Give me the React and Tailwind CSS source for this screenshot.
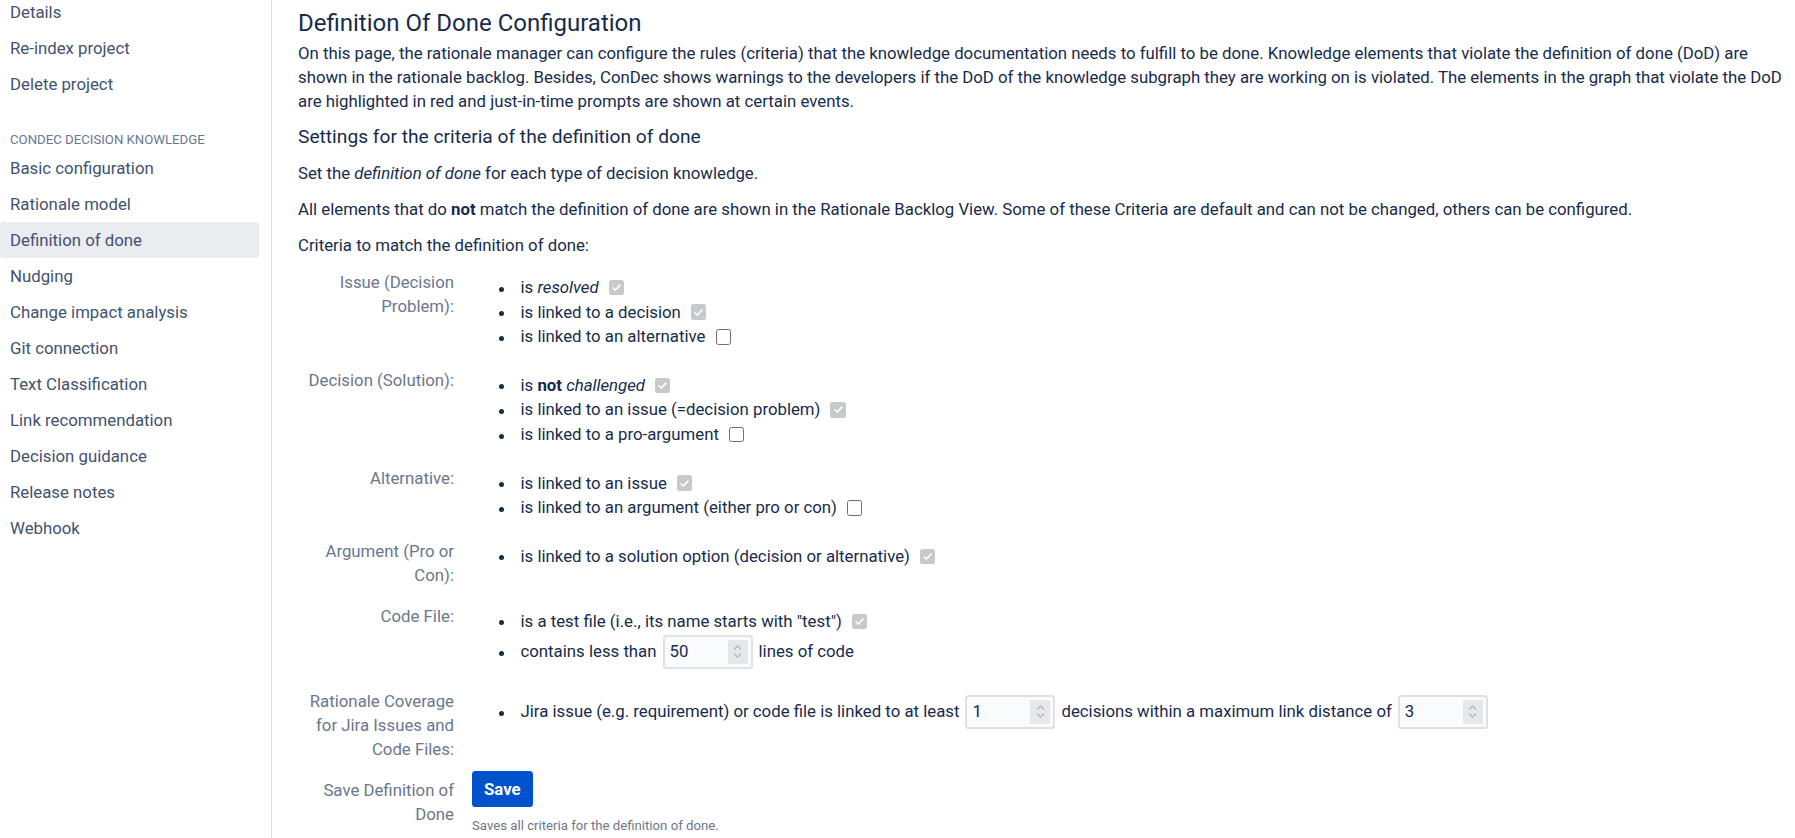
const navTop = ['Details', 'Re-index project', 'Delete project'];
const navDecision = [
  'Basic configuration',
  'Rationale model',
  'Definition of done',
  'Nudging',
  'Change impact analysis',
  'Git connection',
  'Text Classification',
  'Link recommendation',
  'Decision guidance',
  'Release notes',
  'Webhook',
];

function NavItem({ label, active }) {
  return (
    <div
      className={`h-[36px] px-[10px] py-[6px] leading-[24px] rounded-[3.6px] whitespace-nowrap ${
        active ? 'bg-[#ebecf0]' : ''
      }`}
    >
      {label}
    </div>
  );
}

function Checkbox({ checked }) {
  if (checked) {
    return (
      <span className="ml-[10px] inline-flex w-[15.5px] h-[15.5px] shrink-0 items-center justify-center rounded-[2.5px] bg-[#c8c9cc]">
        <svg width="11" height="11" viewBox="0 0 12 12" fill="none">
          <path d="M2.2 6.3 L4.8 8.8 L9.8 3.4" stroke="#ffffff" strokeWidth="1.7" strokeLinecap="round" strokeLinejoin="round" />
        </svg>
      </span>
    );
  }
  return <span className="ml-[10px] inline-block w-[15.5px] h-[15.5px] shrink-0 rounded-[2.5px] border-[1.6px] border-[#6e6e76] bg-white" />;
}

function NumberInput({ value }) {
  return (
    <span className="mx-[6px] flex w-[90px] h-[34px] shrink-0 items-center justify-between rounded-[3.6px] border-2 border-[#dfe1e6] bg-[#fafbfc] pl-[5px] pr-[3px]">
      <span>{value}</span>
      <span className="flex w-[20px] h-[24px] flex-col items-center justify-center gap-[3px] bg-[#e6e7eb]">
        <svg width="9" height="5" viewBox="0 0 9 5" fill="none">
          <path d="M1 4.3 L4.5 1 L8 4.3" stroke="#8a8d94" strokeWidth="1" />
        </svg>
        <svg width="9" height="5" viewBox="0 0 9 5" fill="none">
          <path d="M1 0.7 L4.5 4 L8 0.7" stroke="#8a8d94" strokeWidth="1" />
        </svg>
      </span>
    </span>
  );
}

function Item({ children, tall }) {
  return (
    <li className={`flex items-center ${tall ? 'h-[36px]' : 'h-[24.6px]'}`}>
      <span className="ml-[27px] mr-[16.5px] mt-[3px] w-[5px] h-[5px] shrink-0 rounded-full bg-[#172b4d]" />
      {children}
    </li>
  );
}

function FieldGroup({ label, children }) {
  return (
    <div className="flex pb-[10px]">
      <div className="w-[156px] shrink-0 pt-[7px] text-right leading-[24px] text-[#6b778c]">{label}</div>
      <div className="ml-[18px] flex-1">{children}</div>
    </div>
  );
}

function Criteria({ children }) {
  return <ul className="pt-[12px] pb-[2px]">{children}</ul>;
}

export default function App() {
  return (
    <div className="flex h-[838px] overflow-hidden bg-white font-['Roboto',sans-serif] text-[16.8px] text-[#172b4d]">
      <aside className="w-[272px] shrink-0 border-r border-[#dfe1e6] pr-[12px] text-[#42526e]">
        <div className="-mt-[6px]">
          {navTop.map((n) => (
            <NavItem key={n} label={n} />
          ))}
          <div className="h-[48px] pt-[28px] px-[10px] text-[13.2px] leading-[19.2px] text-[#6b778c] whitespace-nowrap">
            CONDEC DECISION KNOWLEDGE
          </div>
          {navDecision.map((n) => (
            <NavItem key={n} label={n} active={n === 'Definition of done'} />
          ))}
        </div>
      </aside>

      <main className="flex-1 min-w-0 pl-[26px] pr-[6px]">
        <h2 className="mt-[9px] text-[24px] leading-[28.8px] font-normal">Definition Of Done Configuration</h2>
        <p className="mt-[3.5px] leading-[24px] whitespace-nowrap">
          On this page, the rationale manager can configure the rules (criteria) that the knowledge documentation needs to
          fulfill to be done. Knowledge elements that violate the definition of done (DoD) are
          <br />
          shown in the rationale backlog. Besides, ConDec shows warnings to the developers if the DoD of the knowledge subgraph
          they are working on is violated. The elements in the graph that violate the DoD
          <br />
          are highlighted in red and just-in-time prompts are shown at certain events.
        </p>
        <h3 className="mt-[12px] text-[19.2px] leading-[24px] font-normal">Settings for the criteria of the definition of done</h3>
        <p className="mt-[12px] leading-[24px]">
          Set the <em>definition of done</em> for each type of decision knowledge.
        </p>
        <p className="mt-[12px] leading-[24px] whitespace-nowrap">
          All elements that do <strong>not</strong> match the definition of done are shown in the Rationale Backlog View. Some of
          these Criteria are default and can not be changed, others can be configured.
        </p>
        <p className="mt-[12px] leading-[24px]">Criteria to match the definition of done:</p>

        <form className="mt-[6px]" onSubmit={(e) => e.preventDefault()}>
          <FieldGroup
            label={
              <>
                Issue (Decision
                <br />
                Problem):
              </>
            }
          >
            <Criteria>
              <Item>
                is&nbsp;<em>resolved</em>
                <Checkbox checked />
              </Item>
              <Item>
                is linked to a decision
                <Checkbox checked />
              </Item>
              <Item>
                is linked to an alternative
                <Checkbox />
              </Item>
            </Criteria>
          </FieldGroup>

          <FieldGroup label="Decision (Solution):">
            <Criteria>
              <Item>
                is&nbsp;<strong>not</strong>&nbsp;<em>challenged</em>
                <Checkbox checked />
              </Item>
              <Item>
                is linked to an issue (=decision problem)
                <Checkbox checked />
              </Item>
              <Item>
                is linked to a pro-argument
                <Checkbox />
              </Item>
            </Criteria>
          </FieldGroup>

          <FieldGroup label="Alternative:">
            <Criteria>
              <Item>
                is linked to an issue
                <Checkbox checked />
              </Item>
              <Item>
                is linked to an argument (either pro or con)
                <Checkbox />
              </Item>
            </Criteria>
          </FieldGroup>

          <FieldGroup
            label={
              <>
                Argument (Pro or
                <br />
                Con):
              </>
            }
          >
            <Criteria>
              <Item>
                is linked to a solution option (decision or alternative)
                <Checkbox checked />
              </Item>
            </Criteria>
          </FieldGroup>

          <FieldGroup label="Code File:">
            <Criteria>
              <Item>
                is a test file (i.e., its name starts with "test")
                <Checkbox checked />
              </Item>
              <Item tall>
                contains less than
                <NumberInput value="50" />
                lines of code
              </Item>
            </Criteria>
          </FieldGroup>

          <FieldGroup
            label={
              <>
                Rationale Coverage
                <br />
                for Jira Issues and
                <br />
                Code Files:
              </>
            }
          >
            <Criteria>
              <Item tall>
                <span className="whitespace-nowrap">Jira issue (e.g. requirement) or code file is linked to at least</span>
                <NumberInput value="1" />
                <span className="whitespace-nowrap">decisions within a maximum link distance of</span>
                <NumberInput value="3" />
              </Item>
            </Criteria>
          </FieldGroup>

          <FieldGroup
            label={
              <>
                Save Definition of
                <br />
                Done
              </>
            }
          >
            <button
              type="submit"
              className="h-[36px] rounded-[3.6px] bg-[#0052cc] px-[12px] font-bold leading-[36px] text-white"
            >
              Save
            </button>
            <div className="mt-[9px] text-[13.2px] leading-[19.2px] text-[#6b778c]">
              Saves all criteria for the definition of done.
            </div>
          </FieldGroup>
        </form>
      </main>
    </div>
  );
}
